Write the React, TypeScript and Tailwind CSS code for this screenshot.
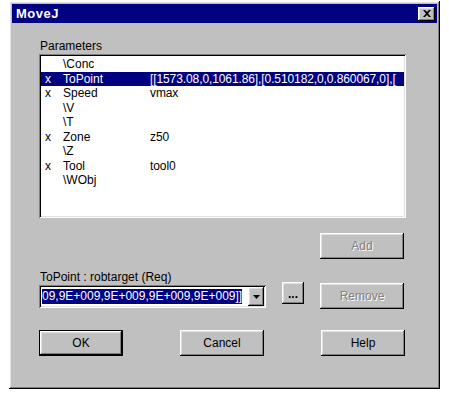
const raised =
  'shadow-[inset_-1px_-1px_#000,inset_1px_1px_#fff,inset_-2px_-2px_#808080,inset_2px_2px_#dfdfdf]'
const sunken =
  'shadow-[inset_1px_1px_#808080,inset_-1px_-1px_#fff,inset_2px_2px_#000,inset_-2px_-2px_#dfdfdf]'

const rows = [
  { mark: '', name: '\\Conc', value: '' },
  { mark: 'x', name: 'ToPoint', value: '[[1573.08,0,1061.86],[0.510182,0,0.860067,0],[', selected: true },
  { mark: 'x', name: 'Speed', value: 'vmax' },
  { mark: '', name: '\\V', value: '' },
  { mark: '', name: '\\T', value: '' },
  { mark: 'x', name: 'Zone', value: 'z50' },
  { mark: '', name: '\\Z', value: '' },
  { mark: 'x', name: 'Tool', value: 'tool0' },
  { mark: '', name: '\\WObj', value: '' },
]

function Button({ label, disabled, isDefault }: { label: string; disabled?: boolean; isDefault?: boolean }) {
  if (isDefault) {
    return (
      <div className="w-[84px] h-[26px] border border-black">
        <div className={`w-full h-full flex items-center justify-center bg-[#c0c0c0] ${raised}`}>{label}</div>
      </div>
    )
  }
  return (
    <div
      className={`w-[84px] h-[26px] flex items-center justify-center bg-[#c0c0c0] ${raised} ${
        disabled ? 'text-[#808080] [text-shadow:1px_1px_0_#fff]' : ''
      }`}
    >
      {label}
    </div>
  )
}

export default function App() {
  return (
    <div className="w-[449px] h-[398px] bg-white pt-[1px] pl-[9px] font-['Liberation_Sans',Arial,sans-serif] text-[12px] text-black">
      <div className={`w-[431px] h-[388px] bg-[#c0c0c0] p-[3px] flex flex-col ${raised}`}>
        {/* title bar */}
        <div className="h-[19px] bg-[#000080] flex items-center justify-between pl-[4px] pr-[2px]">
          <span className="text-white font-bold text-[13px] tracking-[0.5px]">MoveJ</span>
          <div className={`w-[17px] h-[14px] bg-[#c0c0c0] flex items-center justify-center ${raised}`}>
            <svg width="8" height="7" viewBox="0 0 8 7">
              <path d="M0 0h2l2 2 2-2h2L5 3.5 8 7H6L4 5 2 7H0l3-3.5z" fill="#000" />
            </svg>
          </div>
        </div>

        <div className="pl-[27px] flex flex-col">
          <div className="mt-[15px] h-[16px] leading-[16px] pl-[1px]">Parameters</div>

          {/* parameter list */}
          <div className={`w-[367px] h-[164px] bg-white p-[2px] overflow-hidden ${sunken}`}>
            <div className="pt-[1px]">
              {rows.map((r, i) => (
                <div
                  key={i}
                  className={`flex h-[14.5px] leading-[14.5px] whitespace-nowrap overflow-hidden ${
                    r.selected ? 'bg-[#000080] text-white' : ''
                  }`}
                >
                  <span className="w-[22px] pl-[4px] shrink-0">{r.mark}</span>
                  <span className="w-[87px] shrink-0">{r.name}</span>
                  <span className="tracking-[-0.1px]">{r.value}</span>
                </div>
              ))}
            </div>
          </div>

          <div className="flex items-start mt-[15px] w-[365px]">
            <div className="w-[227px] mt-[36px] flex flex-col">
              <div className="h-[16px] leading-[16px] pl-[1px]">ToPoint : robtarget (Req)</div>
              <div className={`h-[23px] bg-white p-[2px] flex ${sunken}`}>
                <div className="flex-1 overflow-hidden flex items-center pl-[1px] pr-[2px]">
                  <span className="bg-[#000080] text-white leading-[15px] whitespace-nowrap">
                    09,9E+009,9E+009,9E+009,9E+009]]
                  </span>
                </div>
                <div className={`w-[16px] h-full bg-[#c0c0c0] flex items-center justify-center ${raised}`}>
                  <svg width="7" height="4" viewBox="0 0 7 4">
                    <path d="M0 0h7L3.5 4z" fill="#000" />
                  </svg>
                </div>
              </div>
            </div>
            <div
              className={`ml-[16px] mt-[49px] w-[22px] h-[22px] bg-[#c0c0c0] flex items-end justify-center pb-[4px] font-bold leading-none ${raised}`}
            >
              ...
            </div>
            <div className="ml-auto flex flex-col gap-[24px]">
              <Button label="Add" disabled />
              <Button label="Remove" disabled />
            </div>
          </div>

          <div className="flex mt-[21px] gap-[57px]">
            <Button label="OK" isDefault />
            <Button label="Cancel" />
            <Button label="Help" />
          </div>
        </div>
      </div>
    </div>
  )
}
